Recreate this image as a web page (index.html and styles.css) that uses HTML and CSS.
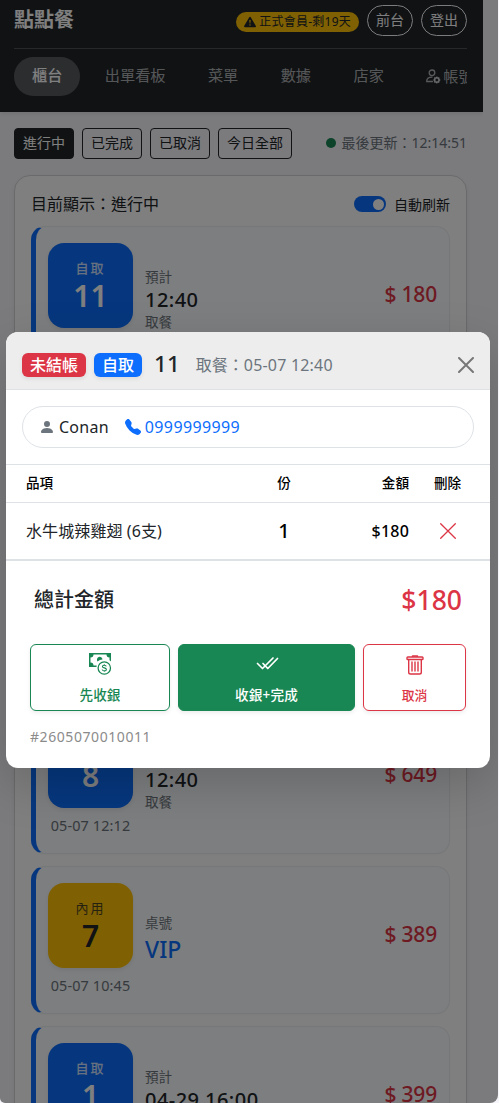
FILE: index.html
```html
<!DOCTYPE html>
<html lang="zh-Hant">
<head>
<meta charset="utf-8">
<title>點點餐</title>
<link rel="stylesheet" href="styles.css">
</head>
<body>
<div class="app">
  <header class="topbar">
    <div class="topbar-row">
      <div class="brand">點點餐</div>
      <span class="member"><svg width="12" height="12" viewBox="0 0 16 16" fill="currentColor"><path d="M8.982 1.566a1.13 1.13 0 0 0-1.96 0L.165 13.233c-.457.778.091 1.767.98 1.767h13.713c.889 0 1.438-.99.98-1.767zM8 5c.535 0 .954.462.9.995l-.35 3.507a.552.552 0 0 1-1.1 0L7.1 5.995A.905.905 0 0 1 8 5m.002 6a1 1 0 1 1 0 2 1 1 0 0 1 0-2"/></svg><span>正式會員-剩19天</span></span>
      <span class="pill">前台</span>
      <span class="pill">登出</span>
    </div>
    <nav class="nav">
      <span class="nav-item active">櫃台</span>
      <span class="nav-item">出單看板</span>
      <span class="nav-item">菜單</span>
      <span class="nav-item">數據</span>
      <span class="nav-item">店家</span>
      <span class="nav-item account"><svg width="16" height="16" viewBox="0 0 16 16" fill="none" stroke="currentColor"><circle cx="7" cy="4.800" r="2.800" stroke-width="1.300"/><path stroke-width="1.300" stroke-linecap="round" d="M7.500 13.500H1.700c-.2-2.800 1.700-4.400 5.300-4.400"/><circle cx="11.800" cy="12" r="2.100" stroke-width="1.700"/><path stroke-width="1.300" d="M11.800 8.500v1.500m0 4v1.500M8.300 12h1.500m4 0h1.500M9.300 9.500l1 1m3 3 1 1m0-5-1 1m-3 3-1 1"/></svg>帳號</span>
    </nav>
  </header>
  <div class="filters">
    <span class="filter on">進行中</span><span class="filter">已完成</span><span class="filter">已取消</span><span class="filter">今日全部</span>
    <span class="updated"><i class="dot"></i><span>最後更新：12:14:51</span></span>
  </div>
  <main class="panel">
    <div class="panel-head">
      <span>目前顯示：進行中</span>
      <span class="switch-wrap"><i class="switch"></i>自動刷新</span>
    </div>
    <article class="order">
      <div class="left"><div class="tile"><small>自取</small><b>11</b></div></div>
      <div class="info"><span>預計</span><strong>12:40</strong><span>取餐</span></div>
      <div class="price">$ 180</div>
    </article>
    <article class="order"></article>
    <article class="order"></article>
    <article class="order">
      <div class="left"><div class="tile"><small></small><b>8</b></div><div class="stamp">05-07 12:12</div></div>
      <div class="info"><span>預計</span><strong>12:40</strong><span>取餐</span></div>
      <div class="price">$ 649</div>
    </article>
    <article class="order">
      <div class="left"><div class="tile dine"><small>內用</small><b>7</b></div><div class="stamp">05-07 10:45</div></div>
      <div class="info"><span>桌號</span><strong class="table">VIP</strong></div>
      <div class="price">$ 389</div>
    </article>
    <article class="order">
      <div class="left"><div class="tile"><small>自取</small><b>1</b></div></div>
      <div class="info"><span>預計</span><strong>04-29 16:00</strong><span>取餐</span></div>
      <div class="price">$ 399</div>
    </article>
  </main>
</div>
<div class="backdrop">
  <section class="modal">
    <header class="modal-head">
      <span class="badge red">未結帳</span>
      <span class="badge blue">自取</span>
      <span class="num">11</span>
      <span class="pickup">取餐：<span class="digits">05-07 12:40</span></span>
      <svg class="close" width="16" height="16" viewBox="0 0 16 16" stroke="#777" stroke-width="2" stroke-linecap="round"><path d="M1 1l14 14M15 1 1 15"/></svg>
    </header>
    <div class="customer">
      <svg width="16" height="16" viewBox="0 0 16 16" fill="#6c757d"><path d="M3 14s-1 0-1-1 1-4 6-4 6 3 6 4-1 1-1 1zm5-6a3 3 0 1 0 0-6 3 3 0 0 0 0 6"/></svg>
      <span class="name">Conan</span>
      <svg width="16" height="16" viewBox="0 0 16 16" fill="#0d6efd"><path fill-rule="evenodd" d="M1.885.511a1.745 1.745 0 0 1 2.610.163L6.290 2.980c.329.423.445.974.315 1.494l-.547 2.190a.68.68 0 0 0 .178.643l2.457 2.457a.68.68 0 0 0 .644.178l2.189-.547a1.750 1.750 0 0 1 1.494.315l2.306 1.794c.829.645.905 1.870.163 2.611l-1.034 1.034c-.740.740-1.846 1.065-2.877.702a18.600 18.600 0 0 1-7.010-4.420 18.600 18.600 0 0 1-4.420-7.009c-.362-1.030-.037-2.137.703-2.877z"/></svg>
      <span class="phone">0999999999</span>
    </div>
    <div class="row head"><span>品項</span><span class="c">份</span><span class="r">金額</span><span class="c">刪除</span></div>
    <div class="row item"><span class="dish">水牛城辣雞翅 (6支)</span><span class="c qty">1</span><span class="r amount">$180</span><span class="c del"><svg width="16" height="16" viewBox="0 0 16 16" stroke="#dc3545" stroke-width="1.300" stroke-linecap="round"><path d="M.7.7l14.600 14.600M15.300.7.7 15.300"/></svg></span></div>
    <div class="total"><span>總計金額</span><strong>$180</strong></div>
    <div class="actions">
      <div class="btn pay"><svg width="24" height="24" viewBox="0 0 24 24" fill="none" stroke="currentColor"><path fill="currentColor" stroke="none" fill-rule="evenodd" d="M1 1h22v8.500a9 9 0 0 0-1.500-1.300V5.500a3 3 0 0 1-3-3h-13a3 3 0 0 1-3 3v5a3 3 0 0 1 3 3h3.200a9 9 0 0 0-.2 1.500H1z"/><path fill="currentColor" stroke="none" d="M14.500 7.500a2.800 2.800 0 1 0-5 1.900 9 9 0 0 1 5-1.900"/><circle cx="16.300" cy="16" r="6.200" stroke-width="1.300"/><path stroke-width="1.100" d="M18.300 14.400c-.2-.8-.9-1.200-2-1.200s-1.900.5-1.900 1.300c0 2 4 .8 4 3 0 .9-.9 1.400-2.100 1.400s-2-.5-2.200-1.400M16.300 12.200v1M16.300 18.800v1"/></svg><span>先收銀</span></div>
      <div class="btn done"><svg width="24" height="24" viewBox="0 0 24 24" fill="none" stroke="currentColor" stroke-width="1.700" stroke-linecap="round" stroke-linejoin="round"><path d="M2.500 11.500l5 5L18 6M8 11.500l1.300 1.300M11.200 14.800l1.600 1.700L22.500 6.500"/></svg><span>收銀+完成</span></div>
      <div class="btn cancel"><svg width="20" height="20" viewBox="0 0 20 20" fill="none" stroke="currentColor" stroke-width="1.400" stroke-linejoin="round"><path d="M7.500 2V1h5v1"/><rect x="2" y="2" width="16" height="2.500" rx=".8"/><path stroke-linecap="round" d="M3.700 4.500v12.700q0 1.800 1.800 1.800h9q1.800 0 1.800-1.800V4.500M7 7v9M10 7v9M13 7v9"/></svg><span>取消</span></div>
    </div>
    <div class="order-id">#2605070010011</div>
  </section>
</div>
</body>
</html>
```
FILE: styles.css
```css
* { box-sizing: border-box; }
html { background: #f6f6fa; }
body {
  margin: 0;
  height: 1103px;
  overflow: hidden;
  position: relative;
  font-family: "Noto Sans", "Noto Sans CJK TC", sans-serif;
  font-size: 16px;
  line-height: 1.5;
  color: #212529;
}
svg { display: block; flex: none; }
.app { width: 483px; height: 1103px; overflow: hidden; }

.topbar { height: 112px; background: #212529; padding: 0 16px 0 14px; box-shadow: 0 2px 4px rgba(0,0,0,.075); color: #fff; }
.topbar-row { height: 49px; display: flex; align-items: center; gap: 8px; padding-bottom: 8px; border-bottom: 1px solid #4d5154; }
.brand { font-size: 20px; font-weight: 700; margin-right: auto; line-height: 40px; }
.member { height: 20px; margin-top: 4px; padding: 0 8px; border-radius: 10px; background: #ffc107; color: #212529; font-size: 12px; letter-spacing: .25px; line-height: 20px; display: flex; align-items: center; gap: 3px; white-space: nowrap; }
.pill { height: 31px; width: 46px; border: 1px solid #f8f9fa; border-radius: 16px; font-size: 14px; line-height: 28px; text-align: center; }
.nav { display: flex; gap: 6.4px; margin-top: 8px; overflow: hidden; }
.nav-item { flex: none; height: 39px; line-height: 37px; padding: 0 18px; border-radius: 20px; font-size: 15.2px; color: rgba(255,255,255,.65); white-space: nowrap; }
.nav-item.active { background: #585b5f; color: #fff; font-weight: 500; }
.account { display: flex; align-items: center; gap: 2px; padding-left: 17px; padding-bottom: 1px; }

.filters { display: flex; gap: 8px; padding: 16px 16px 0 14px; }
.filter { height: 31px; padding: 0 8px; border: 1px solid #212529; border-radius: 4px; font-size: 14px; line-height: 28px; white-space: nowrap; }
.filter.on { background: #212529; color: #fff; }
.updated { margin-left: auto; display: flex; align-items: center; gap: 5px; font-size: 14px; line-height: 20px; padding-bottom: 1px; color: #6c757d; white-space: nowrap; }
.dot { width: 10px; height: 10px; border-radius: 50%; background: #198754; }

.panel { margin: 16px 16px 0 14px; padding: 16px; border: 1px solid #d4d5d8; border-radius: 16px; background: #fff; box-shadow: 0 2px 4px rgba(0,0,0,.06); height: 1100px; }
.panel-head { display: flex; justify-content: space-between; align-items: center; height: 24px; margin-bottom: 10px; }
.switch-wrap { display: flex; align-items: center; gap: 8px; font-size: 14px; }
.switch { width: 32px; height: 16px; border-radius: 8px; background: #0d6efd; padding: 2.500px; display: flex; justify-content: flex-end; }
.switch::after { content: ""; width: 11px; height: 11px; border-radius: 50%; background: #fff; }

.order { display: flex; height: 148px; margin-bottom: 12px; padding: 16px 12px; border: 1px solid #eceff2; border-left: 5px solid #0d6efd; border-radius: 14px; background: #fafcfe; box-shadow: 0 1px 2px rgba(0,0,0,.03); }
.left { width: 85px; }
.tile { width: 85px; height: 85px; border-radius: 16px; background: #0d6efd; color: #fff; display: flex; flex-direction: column; align-items: center; padding-top: 16px; box-shadow: 0 2px 4px rgba(0,0,0,.075); }
.tile small { font-size: 13px; height: 18px; line-height: 18px; letter-spacing: 2px; opacity: .8; font-weight: 500; }
.tile b { font-size: 30px; line-height: 38px; font-weight: 600; }
.tile.dine { background: #ffc107; color: #212529; }
.tile.dine small { font-weight: 400; }
.stamp { font-size: 14.400px; line-height: 20px; margin-top: 8px; letter-spacing: .15px; color: #6c757d; text-align: center; white-space: nowrap; }
.info { display: flex; flex-direction: column; justify-content: center; margin-left: 12px; padding-bottom: 2px; flex: 1; font-size: 13.600px; line-height: 20px; color: #6c757d; }
.info strong { font-size: 20px; line-height: 25px; letter-spacing: .45px; font-weight: 500; color: #212529; white-space: nowrap; }
.info .table { font-size: 23px; line-height: 33px; letter-spacing: 0; color: #0d6efd; }
.price { align-self: center; margin-top: -10px; font-size: 21px; letter-spacing: -.2px; font-weight: 500; color: #dc3545; }

.backdrop { position: absolute; inset: 0 1px 0 0; background: rgba(0,0,0,.5); border-radius: 0 0 8px 5px; display: flex; align-items: flex-start; padding: 332px 8px 0 6px; overflow: hidden; }
.modal { width: 484px; height: 436px; border-radius: 12px; background: #fff; overflow: hidden; box-shadow: 0 16px 48px rgba(0,0,0,.175); }
.modal-head { height: 58px; background: #ededed; border-bottom: 1px solid #dee2e6; padding: 8px 16px 0; display: flex; align-items: center; }
.badge { height: 24px; padding: 0 8px; border-radius: 6px; color: #fff; font-size: 16px; line-height: 24px; font-weight: 500; margin-right: 8px; box-shadow: 0 2px 4px rgba(0,0,0,.075); }
.red { background: #dc3545; }
.blue { background: #0d6efd; }
.num { font-size: 22.500px; line-height: 30px; font-weight: 500; margin-left: 4px; padding-bottom: 2px; }
.pickup { font-size: 16px; color: #6c757d; margin-left: 16px; white-space: nowrap; }
.digits { letter-spacing: .2px; }
.close { margin-left: auto; }
.customer { margin: 16px; height: 42px; border: 1px solid #dee2e6; border-radius: 21px; display: flex; align-items: center; padding: 0 16px; }
.name { margin: 0 16px 0 4px; letter-spacing: .25px; }
.phone { margin-left: 4px; color: #0d6efd; letter-spacing: .38px; }
.row { display: grid; grid-template-columns: 222px 72px 89px 77px; padding-left: 20px; align-items: center; border-top: 1px solid #dee2e6; color: #000; }
.c { text-align: center; }
.r { text-align: right; }
.head { height: 38px; font-size: 13.600px; font-weight: 500; }
.item { height: 59px; border-bottom: 2px solid #dee2e6; }
.dish { color: #212529; letter-spacing: .1px; }
.qty { font-size: 20px; font-weight: 500; }
.amount { font-weight: 500; letter-spacing: .2px; }
.del { display: flex; justify-content: center; }
.total { height: 83px; padding: 0 28px 5px 28px; display: flex; align-items: center; justify-content: space-between; font-size: 20px; font-weight: 500; }
.total strong { font-size: 26.500px; line-height: 40px; font-weight: 500; color: #dc3545; }
.actions { display: grid; grid-template-columns: 140px 177px 103px; gap: 8px; padding: 0 24px; }
.btn { height: 67px; border: 1px solid; border-radius: 6px; display: flex; flex-direction: column; align-items: center; padding-top: 7px; font-size: 13.600px; font-weight: 500; line-height: 20px; box-shadow: 0 2px 4px rgba(0,0,0,.075); }
.btn span { margin-top: auto; padding-bottom: 5px; }
.pay { color: #198754; }
.done { color: #fff; background: #198754; border-color: #198754; letter-spacing: .2px; }
.cancel { color: #dc3545; font-size: 12.800px; padding-top: 10px; }
.order-id { margin: 16px 24px 0; font-size: 14px; line-height: 20px; color: #8b8b8b; letter-spacing: .57px; }
```
